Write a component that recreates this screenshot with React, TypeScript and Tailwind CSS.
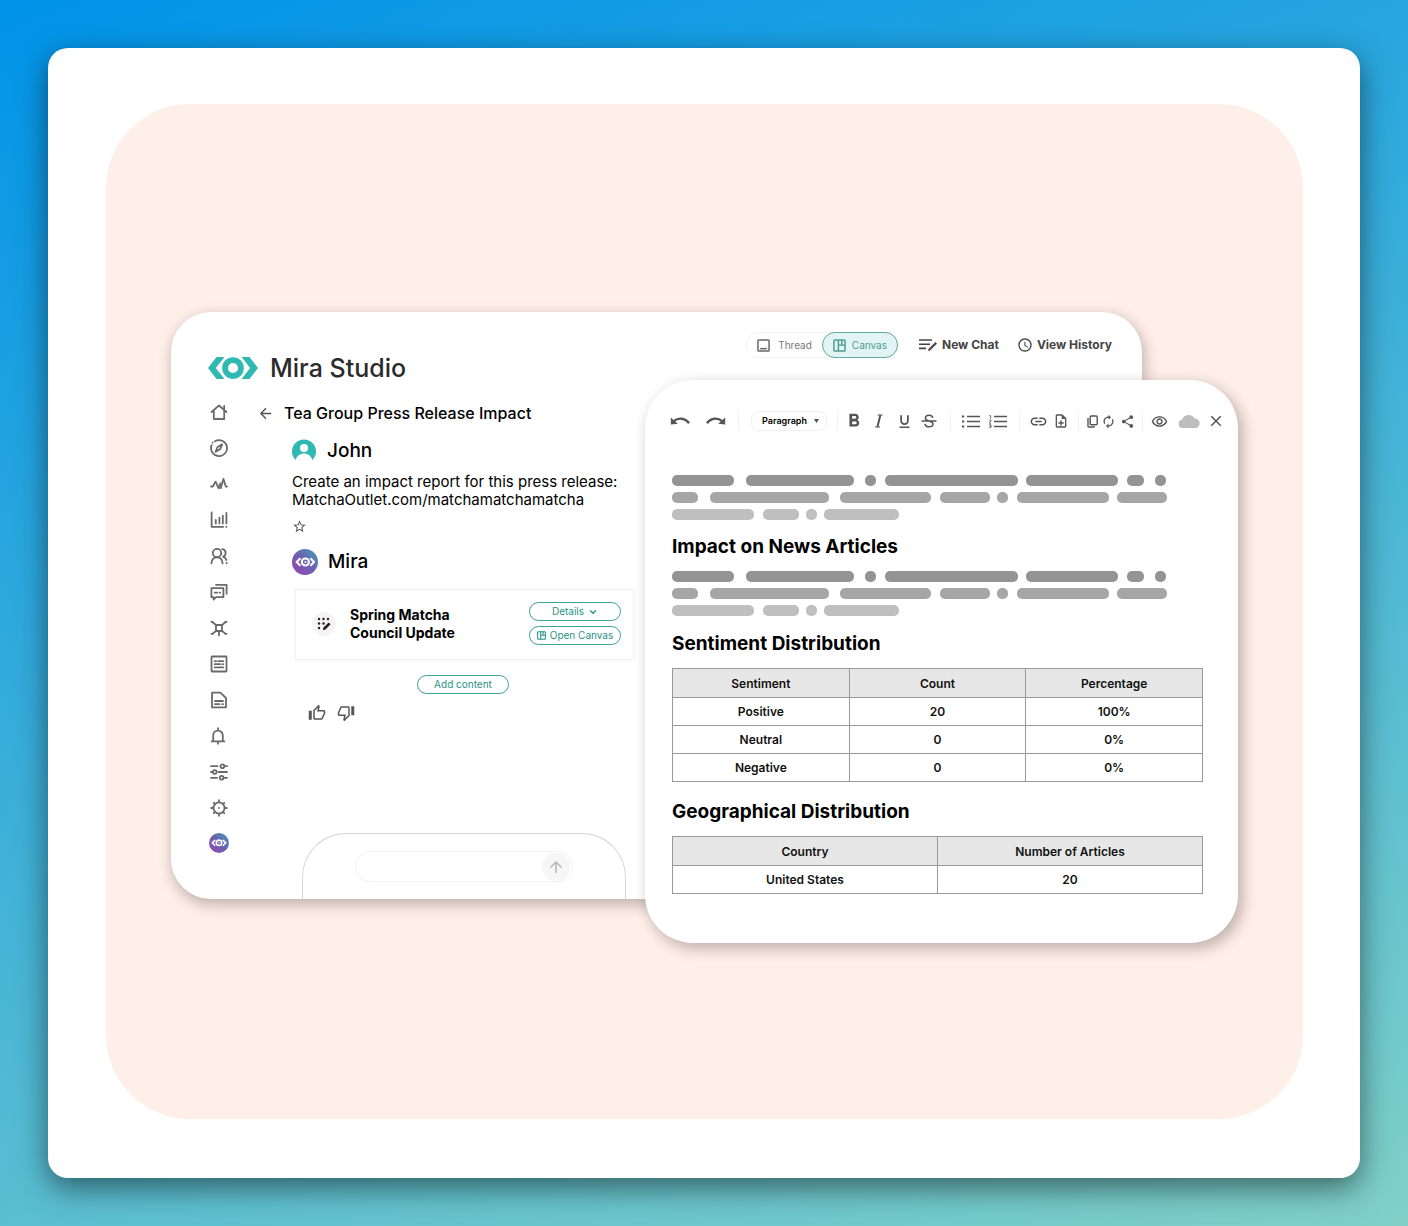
import { type ReactNode } from 'react';
import { clsx } from 'clsx';
import {
  MdAccessTime,
  MdArrowBack,
  MdArrowUpward,
  MdAutorenew,
  MdClose,
  MdFormatBold,
  MdFormatUnderlined,
  MdInsertLink,
  MdOutlineNoteAdd,
  MdOutlineRemoveRedEye,
  MdOutlineThumbDown,
  MdOutlineThumbUp,
  MdShare,
  MdStarOutline,
} from 'react-icons/md';
import { ChevronDown } from 'lucide-react';

interface NavItem {
  label: string;
  icon: ReactNode;
}

/** Sidebar glyphs, all drawn on an 18x18 grid. */
const NAV: NavItem[] = [
  {
    label: 'Home',
    icon: <path d="M1.5 9 9 2.5 16.500 9M3.800 7.800V16h10.400V7.800M14.200 2.800v2.600" />,
  },
  {
    label: 'Explore',
    icon: (
      <>
        <path d="M5 2.200A8 8 0 1 1 1.600 6.200" />
        <path d="m12.200 5.400-2 4.800-4.600 2.600 2-4.800z" />
        <path d="M2.600 3.400v.2" />
      </>
    ),
  },
  {
    label: 'Monitor',
    icon: <path d="M1 11.500h1.800L5.600 6.600l3 6.800 1.600-5M10.800 13.200l2.600-9.400 2.400 7.800H17" />,
  },
  {
    label: 'Analytics',
    icon: <path d="M1.600 1.400v14.400h11.600M5.800 9v3.400M9.400 6.600v5.800M12.800 4.600v7.800M16.400 2v10.400M16.300 15.700v.2" />,
  },
  {
    label: 'Contacts',
    icon: (
      <>
        <circle cx="7" cy="6" r="4.200" />
        <path d="M1.400 16.400c.2-3.600 2.200-6 5.600-6s5.400 2.400 5.600 6M12.200 2.200c4.200.2 4.600 6.400.8 7.400 1.600.6 2.800 1.600 3.400 3.400M16.600 16v.2" />
      </>
    ),
  },
  {
    label: 'Messages',
    icon: (
      <>
        <path d="M1.400 5.200h12v9H6l-2.400 2.400v-2.400H1.400z" />
        <path d="M6 1.800h10.600v9M4.800 9.700h2.600M9.800 9.700h.4" />
      </>
    ),
  },
  {
    label: 'Network',
    icon: (
      <>
        <path d="M6 6h6v6H6zM6 6 2.400 3M12 6l3.600-3M6 12l-3.400 2.600M12 12l3.400 2.600M9 12v4.400" />
        <path d="M1.400 2.800h1.200M15.400 2.800h1.200M1.400 14.800h1.400M15.400 14.800h1.200" />
      </>
    ),
  },
  {
    label: 'News',
    icon: (
      <>
        <rect x="1.500" y="1.500" width="15" height="15" rx="0.500" />
        <path d="M4.800 6.200h1.400M8.200 6.200h5M4.800 9.200h5.400M12.400 9.200h.8M4.800 12.400h8.400" />
      </>
    ),
  },
  {
    label: 'Reports',
    icon: <path d="M2 1.600h8.400L16 7v9.400H2zM5 10h8M5 13.200h4.400M12.200 13.200h.8" />,
  },
  {
    label: 'Alerts',
    icon: <path d="M1.600 14.400h12.800M3.200 14.200V8.400a4.800 4.800 0 0 1 9.600 0v5.800M8 3.400V1.200M8 14.600v2.200" />,
  },
  {
    label: 'Filters',
    icon: (
      <>
        <circle cx="12.400" cy="3.200" r="1.900" />
        <circle cx="4.800" cy="9" r="1.900" />
        <circle cx="11.600" cy="14.800" r="1.900" />
        <path d="M1 3.200h6.400M14.400 3.200H17M1 9h1.800M8.800 9H17M1 14.800h6M13.600 14.800H17" />
      </>
    ),
  },
  {
    label: 'Settings',
    icon: (
      <>
        <circle cx="9" cy="9" r="5.600" />
        <path d="M9 3.400V1.200M9 14.600v2.200M3.400 9H1.200M14.600 9h2.200M5 5 3.800 3.800M13 5l1.200-1.200M5 13l-1.200 1.200M13 13l1.200 1.200M9 8.900v.2" />
      </>
    ),
  },
];

// [space before, width] in px for every pill of a placeholder line
type Pill = [number, number];

const LINES: { color: string; pills: Pill[] }[] = [
  {
    color: 'bg-[#949494]',
    pills: [[0, 62], [12, 108], [11, 11], [9, 133], [8, 92], [9, 17], [11, 11]],
  },
  {
    color: 'bg-[#a6a6a6]',
    pills: [[0, 26], [12, 119], [11, 91], [9, 50], [7, 11], [9, 92], [8, 50]],
  },
  {
    color: 'bg-[#bfbfc0]',
    pills: [[0, 82], [9, 36], [7, 11], [7, 75]],
  },
];

function EyeMark({ className }: { className?: string }) {
  return (
    <svg viewBox="0 0 50 22" className={className} fill="currentColor" aria-hidden="true">
      <path d="M8.500 0h8L7.800 11l8.700 11h-8L0 11zM41.500 0h-8l8.700 11-8.700 11h8L50 11z" />
      <path
        fillRule="evenodd"
        d="M25 .2a10.800 10.800 0 1 1 0 21.600 10.800 10.800 0 0 1 0-21.600zm0 5.700a5.100 5.100 0 1 0 0 10.200 5.100 5.100 0 0 0 0-10.200z"
      />
    </svg>
  );
}

function MiraAvatar({ className }: { className: string }) {
  return (
    <span
      className={clsx(
        'flex shrink-0 items-center justify-center rounded-full bg-linear-to-tr from-[#9a3fb0] via-[#6a5fb0] to-[#2f9db8] text-white',
        className,
      )}
    >
      <svg viewBox="0 0 50 24" className="w-4/5" fill="none" stroke="currentColor" strokeWidth="5" aria-hidden="true">
        <path d="M13 3 4 12l9 9M37 3l9 9-9 9" />
        <circle cx="25" cy="12" r="8.500" />
        <circle cx="25" cy="12" r="1" strokeWidth="3" />
      </svg>
    </span>
  );
}

function CanvasIcon({ className }: { className: string }) {
  return (
    <svg viewBox="0 0 14 14" className={className} fill="none" stroke="currentColor" strokeWidth="1.600" aria-hidden="true">
      <rect x="1" y="1" width="12" height="12" rx="1" />
      <path d="M5.800 1v12M5.800 6.600H13M9.400 1v5.600" />
    </svg>
  );
}

function Placeholder() {
  return (
    <div className="flex flex-col gap-1.5" aria-hidden="true">
      {LINES.map((line) => (
        <div key={line.color} className="flex">
          {line.pills.map(([gap, width], i) => (
            <span
              key={i}
              className={clsx('h-[11px] rounded-[5px]', line.color)}
              style={{ marginLeft: gap, width }}
            />
          ))}
        </div>
      ))}
    </div>
  );
}

function DataTable({ head, rows }: { head: string[]; rows: string[][] }) {
  return (
    <table className="w-full table-fixed border-collapse text-center text-xs font-semibold text-[#111]">
      <thead>
        <tr className="h-[29px] bg-[#e7e7e7]">
          {head.map((h) => (
            <th key={h} scope="col" className="border border-[#999] p-0 pt-0.5 font-semibold">
              {h}
            </th>
          ))}
        </tr>
      </thead>
      <tbody>
        {rows.map((row) => (
          <tr key={row[0]} className="h-7">
            {row.map((cell, i) => (
              <td key={i} className="border border-[#999] p-0">
                {cell}
              </td>
            ))}
          </tr>
        ))}
      </tbody>
    </table>
  );
}

function Tool({ label, className, children }: { label: string; className?: string; children: ReactNode }) {
  return (
    <button type="button" aria-label={label} className={clsx('flex h-5 shrink-0 items-center justify-center', className)}>
      {children}
    </button>
  );
}

function Divider({ className }: { className: string }) {
  return <span className={clsx('h-5 w-px shrink-0 bg-[#f0f0f0]', className)} />;
}

function Toolbar() {
  return (
    <div className="flex items-center text-[#555]">
      <Tool label="Undo" className="w-5">
        <svg viewBox="0 0 20 8" className="w-5" fill="none" stroke="currentColor" strokeWidth="2.400">
          <path d="M3.500 4.400C8 .6 15 .4 19 6.200" />
          <path d="M.8.400v7l7-.6z" fill="currentColor" stroke="none" />
        </svg>
      </Tool>
      <Tool label="Redo" className="ml-4 w-5">
        <svg viewBox="0 0 20 8" className="w-5" fill="none" stroke="currentColor" strokeWidth="2.400">
          <path d="M16.500 4.400C12 .6 5 .4 1 6.200" />
          <path d="M19.200.400v7l-7-.6z" fill="currentColor" stroke="none" />
        </svg>
      </Tool>
      <Divider className="mx-3" />
      <label className="relative flex h-5 w-[76px] shrink-0 items-center rounded-lg border border-[#f0f0f0]">
        <select
          aria-label="Block style"
          className="w-full appearance-none bg-transparent pl-2.5 text-[9px] font-semibold text-black outline-none"
        >
          <option>Paragraph</option>
        </select>
        <svg viewBox="0 0 6 5" className="pointer-events-none absolute right-[7px] w-[5px]" fill="currentColor" aria-hidden="true">
          <path d="M0 0h6L3 5z" />
        </svg>
      </label>
      <Divider className="mr-[7px] ml-2.5" />
      <div className="flex gap-[7px]">
        <Tool label="Bold" className="w-[18px]">
          <MdFormatBold size={22} className="shrink-0" />
        </Tool>
        <Tool label="Italic" className="w-[18px]">
          <svg viewBox="0 0 12 14" className="h-3.5" fill="none" stroke="currentColor" aria-hidden="true">
            <path d="M4.600 1h5M2 13h5" strokeWidth="1.200" />
            <path d="M7.400 1 4.400 13" strokeWidth="2" />
          </svg>
        </Tool>
        <Tool label="Underline" className="w-[18px]">
          <MdFormatUnderlined size={17} />
        </Tool>
        <Tool label="Strikethrough" className="w-[18px]">
          <svg viewBox="0 0 16 14" className="w-4" fill="none" stroke="currentColor" strokeWidth="1.500" aria-hidden="true">
            <path d="M.5 7h15M11.800 3.800C11.400 2 10 1.200 8 1.200S4.400 2.200 4.400 4c0 4 7.600 1.800 7.600 6 0 1.800-1.600 2.800-4 2.800s-3.800-1-4.200-3" />
          </svg>
        </Tool>
      </div>
      <Divider className="mr-2.5 ml-3" />
      <div className="flex gap-[7px]">
        <Tool label="Bulleted list" className="w-5">
          <svg viewBox="0 0 18 13" className="w-[18px]" fill="none" stroke="currentColor" aria-hidden="true">
            <path d="M5 1.500h13M5 6.500h13M5 11.500h13" strokeWidth="1.300" />
            <path d="M0 1.500h2.200M0 6.500h2.200M0 11.500h2.200" strokeWidth="2.200" />
          </svg>
        </Tool>
        <Tool label="Numbered list" className="w-5">
          <svg viewBox="0 0 18 13" className="w-[18px]" fill="none" stroke="currentColor" aria-hidden="true">
            <path d="M5 1.500h13M5 6.500h13M5 11.500h13" strokeWidth="1.300" />
            <path d="M.4.600h1.200v3M.2 5.200h1.800v.8L.4 7.600v.6H2.200M.2 9.800h1.800v1.300H.8M2 11.100v1.300H.2" strokeWidth=".9" />
          </svg>
        </Tool>
      </div>
      <Divider className="mr-[9px] ml-[11px]" />
      <div className="flex gap-[7px]">
        <Tool label="Insert link" className="w-[18px]">
          <MdInsertLink size={19} className="shrink-0" />
        </Tool>
        <Tool label="Add note" className="w-3.5">
          <MdOutlineNoteAdd size={16} className="shrink-0" />
        </Tool>
      </div>
      <Divider className="mr-2 ml-2.5" />
      <Tool label="Copy" className="w-2.5">
        <svg viewBox="0 0 11 13" className="h-[13px] shrink-0" fill="none" stroke="currentColor" strokeWidth="1.400" aria-hidden="true">
          <rect x="3.200" y="1" width="7" height="8.800" rx="1" />
          <path d="M1 3v8.200q0 .8.8.8h6" />
        </svg>
      </Tool>
      <Tool label="Refresh" className="ml-1 w-3.5">
        <MdAutorenew size={15} className="shrink-0" />
      </Tool>
      <Tool label="Share" className="ml-[5px] w-3.5">
        <MdShare size={15} className="shrink-0" />
      </Tool>
      <Divider className="mx-2" />
      <Tool label="Preview" className="w-4">
        <MdOutlineRemoveRedEye size={17} className="shrink-0" />
      </Tool>
      <Tool label="Saved to cloud" className="ml-[11px] w-[22px] text-[#bdbdbd]">
        <svg viewBox="0 0 22 14" className="w-[22px]" fill="currentColor" aria-hidden="true">
          <path d="M4.500 14a4.300 4.300 0 0 1-.4-8.500A6.800 6.800 0 0 1 16.600 4.600 4.700 4.700 0 0 1 17.300 14z" />
        </svg>
      </Tool>
      <Tool label="Close" className="ml-2 w-4">
        <MdClose size={18} className="shrink-0" />
      </Tool>
    </div>
  );
}

function EditorPanel() {
  return (
    <section className="relative col-start-2 col-end-4 row-start-1 mt-[68px] rounded-[48px] bg-white pt-[31px] pr-[35px] pb-12 pl-[27px] shadow-[4px_5px_14px_1px_rgba(60,35,35,0.3)]">
      <div className="-mr-5 -ml-0.5">
        <Toolbar />
      </div>
      <div className="mt-11">
        <Placeholder />
      </div>
      <h2 className="mt-[15px] text-[19px] leading-6 font-bold text-black">Impact on News Articles</h2>
      <div className="mt-3">
        <Placeholder />
      </div>
      <h2 className="mt-4 mb-3 text-[19px] leading-6 font-bold text-black">Sentiment Distribution</h2>
      <DataTable
        head={['Sentiment', 'Count', 'Percentage']}
        rows={[
          ['Positive', '20', '100%'],
          ['Neutral', '0', '0%'],
          ['Negative', '0', '0%'],
        ]}
      />
      <h2 className="mt-[18px] mb-3 text-[19px] leading-6 font-bold text-black">Geographical Distribution</h2>
      <DataTable head={['Country', 'Number of Articles']} rows={[['United States', '20']]} />
    </section>
  );
}

function StudioHeader() {
  return (
    <header className="flex items-start justify-between pt-5 pr-[30px] pl-[37px]">
      <a href="#" className="mt-5 flex items-center gap-3">
        <EyeMark className="w-[50px] text-[#2fb9b3]" />
        <span className="text-[25px] leading-8 font-medium text-[#2b2b2b]">Mira Studio</span>
      </a>
      <div className="flex items-center text-[#555]">
        <div className="flex items-center rounded-full border border-[#f4f4f4] text-[10px]">
          <button type="button" className="flex h-6 items-center gap-2 px-2.5 text-[#777]">
            <svg viewBox="0 0 14 14" className="w-[13px] text-[#666]" fill="none" stroke="currentColor" strokeWidth="1.600" aria-hidden="true">
              <rect x="1" y="1" width="12" height="12" rx="1" />
              <path d="M3.400 10.400h7.200" />
            </svg>
            Thread
          </button>
          <button
            type="button"
            className="-my-px flex h-[26px] items-center gap-1.5 rounded-full border border-[#5fa8a3] bg-[#e2f4f3] px-2.5 text-[#4f9c98]"
          >
            <CanvasIcon className="w-[13px]" />
            Canvas
          </button>
        </div>
        <button type="button" className="ml-5 flex items-center gap-[5px] text-[12px] font-bold text-[#444]">
          <svg viewBox="0 0 18 14" className="w-[18px]" fill="none" stroke="currentColor" strokeWidth="1.600" aria-hidden="true">
            <path d="M0 2h13M0 6.200h11M0 10.400h7" />
            <path d="m9.600 12.600.4-1.800 6.400-6.400 1.200 1.200-6.400 6.400z" fill="currentColor" strokeWidth=".8" />
          </svg>
          New Chat
        </button>
        <button type="button" className="ml-[18px] flex items-center gap-1 text-[12px] font-bold text-[#444]">
          <MdAccessTime size={16} />
          View History
        </button>
      </div>
    </header>
  );
}

function Sidebar() {
  return (
    <nav aria-label="Main" className="flex w-[22px] shrink-0 flex-col items-center gap-[18px] pb-[46px]">
      {NAV.map((item) => (
        <a key={item.label} href="#" aria-label={item.label} className="text-[#6a6a6a]">
          <svg
            viewBox="0 0 18 18"
            className="size-[18px]"
            fill="none"
            stroke="currentColor"
            strokeWidth="1.800"
            strokeLinecap="round"
            strokeLinejoin="round"
          >
            {item.icon}
          </svg>
        </a>
      ))}
      <a href="#" aria-label="Mira" className="-mt-0.5">
        <MiraAvatar className="size-5" />
      </a>
    </nav>
  );
}

const outlineButton =
  'flex h-[19px] w-[92px] items-center justify-center gap-1 rounded-full border border-[#3aa592] text-[10px] text-[#1f9484]';

function Chat() {
  return (
    <main className="flex w-[377px] shrink-0 flex-col text-black">
      <div className="flex h-5 items-center">
        <button type="button" aria-label="Back" className="text-[#555]">
          <MdArrowBack size={17} />
        </button>
        <h1 className="ml-2.5 text-[16px] font-medium">Tea Group Press Release Impact</h1>
      </div>

      <div className="flex grow flex-col pl-[35px]">
        <div className="mt-4 flex h-6 items-center gap-[11px]">
          <svg viewBox="0 0 24 24" className="size-6" aria-hidden="true">
            <path d="M3.600 21A12 12 0 1 1 20.400 21C19 16.800 16 14.600 12 14.600S5 16.800 3.600 21z" fill="#2fb9b3" />
            <circle cx="12" cy="9" r="4" fill="#fff" />
          </svg>
          <span className="text-[19px] font-medium">John</span>
        </div>
        <p className="mt-2.5 text-[15px] leading-[18px]">
          Create an impact report for this press release:
          <br />
          MatchaOutlet.com/matchamatchamatcha
        </p>
        <button type="button" aria-label="Favourite" className="mt-2.5 self-start text-[#555]">
          <MdStarOutline size={15} />
        </button>
        <div className="mt-[15px] flex h-[26px] items-center gap-2.5">
          <MiraAvatar className="size-[26px]" />
          <span className="text-[19px] font-medium">Mira</span>
        </div>

        <article className="mt-3.5 ml-[3px] flex h-[71px] items-center border border-[#f2f2f2] pr-3 pb-0.5 pl-4 shadow-[0_0_4px_rgba(0,0,0,0.04)]">
          <span className="flex size-6 items-center justify-center rounded-full bg-[#f6f3f4]">
            <svg viewBox="0 0 14 14" className="size-3.5" fill="#222" aria-hidden="true">
              <circle cx="2" cy="2" r="1.200" />
              <circle cx="6.500" cy="2" r="1.200" />
              <circle cx="11" cy="2" r="1.200" />
              <circle cx="2" cy="6.500" r="1.200" />
              <circle cx="6.500" cy="6.500" r="1.200" />
              <circle cx="2" cy="11" r="1.200" />
              <path d="m6 13 .3-2.200 5.400-5.400 1.900 1.900L8.200 12.700z" />
            </svg>
          </span>
          <h2 className="ml-3.5 text-sm leading-[18px] font-bold">
            Spring Matcha
            <br />
            Council Update
          </h2>
          <div className="ml-auto flex flex-col gap-[5px]">
            <button type="button" className={outlineButton}>
              Details
              <ChevronDown size={10} strokeWidth={3} />
            </button>
            <button type="button" className={outlineButton}>
              <CanvasIcon className="w-[9px]" />
              Open Canvas
            </button>
          </div>
        </article>

        <button type="button" className={clsx(outlineButton, 'mt-[15px] self-center')}>
          Add content
        </button>
        <div className="mt-2.5 ml-4 flex gap-[11px] text-[#555]">
          <button type="button" aria-label="Good response">
            <MdOutlineThumbUp size={18} />
          </button>
          <button type="button" aria-label="Bad response">
            <MdOutlineThumbDown size={18} />
          </button>
        </div>

        <form className="mt-auto mr-2 ml-2.5 h-[66px] rounded-t-[44px] border border-b-0 border-[#d6d6d6] px-[52px] pt-[17px]">
          <div className="flex h-[31px] items-center rounded-full border border-[#f2f2f2] pl-4">
            <input type="text" aria-label="Message" className="min-w-0 grow bg-transparent text-xs outline-none" />
            <button
              type="button"
              aria-label="Send"
              className="mr-0.5 flex size-7 shrink-0 items-center justify-center rounded-full bg-[#f6f6f6] text-[#b5b5b5]"
            >
              <MdArrowUpward size={18} />
            </button>
          </div>
        </form>
      </div>
    </main>
  );
}

export default function App() {
  return (
    <div className="min-h-screen bg-linear-[160deg,#0093e9_0%,#80d0c7_100%] p-12 font-['Inter','Liberation_Sans',sans-serif]">
      <div className="rounded-[20px] bg-white pt-14 pr-[57px] pb-[59px] pl-[58px] shadow-[0_10px_30px_rgba(0,0,0,0.5)]">
        <div className="rounded-[84px] bg-[#feefe8] px-[65px] pt-52 pb-44">
          <div className="grid grid-cols-[474px_1fr_96px]">
            <section className="col-start-1 col-end-3 row-start-1 mb-11 self-start rounded-[40px] bg-white shadow-[2px_5px_14px_1px_rgba(60,35,35,0.3)]">
              <StudioHeader />
              <div className="mt-[19px] flex gap-[27px] pl-[37px]">
                <Sidebar />
                <Chat />
              </div>
            </section>
            <EditorPanel />
          </div>
        </div>
      </div>
    </div>
  );
}
